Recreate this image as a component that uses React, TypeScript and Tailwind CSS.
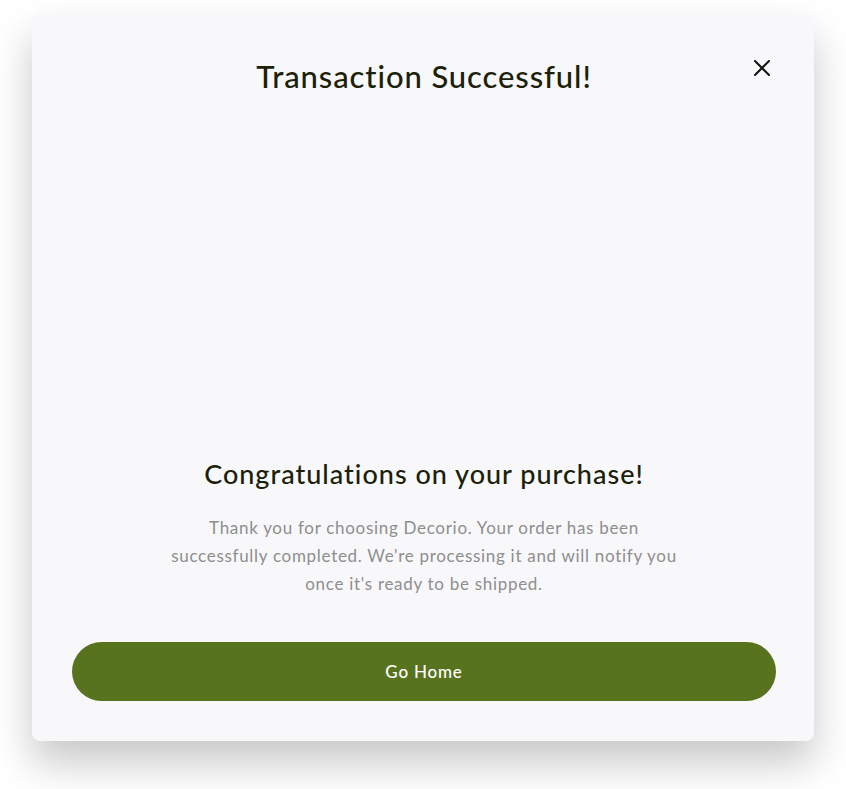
export default function App() {
  return (
    <div className="min-h-screen bg-white px-[32px] pt-[14px] font-['Lato',sans-serif]">
      <div className="relative flex h-[727px] w-[782px] flex-col items-center rounded-lg bg-[#f8f8fa] pb-[40px] pl-[40px] pr-[38px] pt-[42px] shadow-[0_22px_40px_rgba(0,0,0,0.22)]">
        {/* close */}
        <button className="absolute right-[44px] top-[46px] flex h-[16px] w-[16px] items-center justify-center">
          <svg width="16" height="16" viewBox="0 0 16 16" fill="none">
            <path d="M1 1L15 15M15 1L1 15" stroke="#111" strokeWidth="2" strokeLinecap="round" />
          </svg>
        </button>

        <h1 className="text-[31px] leading-[40px] font-medium tracking-[0.9px] text-[#1b2109]">
          Transaction Successful!
        </h1>

        {/* animation area */}
        <div className="h-[360px] w-full" />

        <h2 className="text-[27px] leading-[36px] font-medium tracking-[1px] text-[#1b2109]">
          Congratulations on your purchase!
        </h2>
        <p className="mt-[22px] max-w-[520px] text-center text-[17px] leading-[28px] tracking-[0.7px] text-[#8e8e8e]">
          Thank you for choosing Decorio. Your order has been successfully
          completed. We're processing it and will notify you once it's ready to
          be shipped.
        </p>

        <button className="mt-auto h-[59px] w-full rounded-full bg-[#58731e] text-[17px] font-medium tracking-[0.8px] text-white">
          Go Home
        </button>
      </div>
    </div>
  );
}
